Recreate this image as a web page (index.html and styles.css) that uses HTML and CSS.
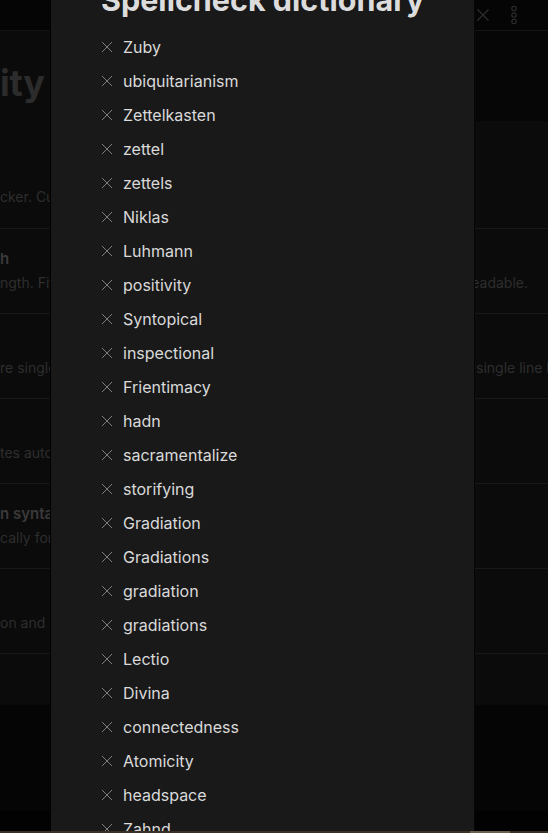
FILE: index.html
```html
<!DOCTYPE html>
<html lang="en">
<head>
<meta charset="utf-8">
<title>Spellcheck dictionary</title>
<link rel="stylesheet" href="styles.css">
</head>
<body>
<div class="screen">
  <header class="topbar">
    <div class="topbar-fill"></div>
    <span class="tb-icon">
      <svg width="14" height="14" viewBox="0 0 14 14"><path d="M1.5 1.5l11 11M12.5 1.5l-11 11" stroke="currentColor" stroke-width="1.2" fill="none"/></svg>
    </span>
    <span class="tb-icon">
      <svg width="8" height="20" viewBox="0 0 8 20"><circle cx="4" cy="3.5" r="2.2" stroke="currentColor" stroke-width="1.1" fill="none"/><circle cx="4" cy="10" r="2.2" stroke="currentColor" stroke-width="1.1" fill="none"/><circle cx="4" cy="16.5" r="2.2" stroke="currentColor" stroke-width="1.1" fill="none"/></svg>
    </span>
  </header>

  <main class="settings">
    <div class="settings-head">
      <h1 class="section-title">ity</h1>
      <div class="head-side"></div>
    </div>

    <div class="setting setting-first">
      <div class="setting-name">&nbsp;</div>
      <div class="setting-desc"><span class="lead">cker. Custom words are stored in the dictionary.</span></div>
    </div>
    <div class="setting">
      <div class="setting-name">h</div>
      <div class="setting-desc"><span class="lead">ngth. Fits less content onscreen, but long paragraphs are more</span><span class="tail">readable.</span></div>
    </div>
    <div class="setting">
      <div class="setting-name">&nbsp;</div>
      <div class="setting-desc setting-desc-bleed"><span class="lead">re single line breaks in reading view. Turn this off to make</span><span class="tail tail-bleed">single line breaks visible.</span></div>
    </div>
    <div class="setting">
      <div class="setting-name">&nbsp;</div>
      <div class="setting-desc"><span class="lead">tes automatically when typing.</span></div>
    </div>
    <div class="setting">
      <div class="setting-name">n syntax</div>
      <div class="setting-desc"><span class="lead">cally for bold, italic, code and more.</span></div>
    </div>
    <div class="setting">
      <div class="setting-name">&nbsp;</div>
      <div class="setting-desc"><span class="lead">on and list markers.</span></div>
    </div>
    <div class="setting setting-last"></div>
  </main>

  <div class="bottom-dark"></div>
  <div class="bottom-black"></div>
</div>

<div class="modal">
  <div class="modal-content">
    <h2 class="modal-title">Spellcheck dictionary</h2>
    <ul class="word-list">
      <li class="word"><span class="word-remove"><svg width="12" height="12" viewBox="0 0 12 12"><path d="M1 1l10 10M11 1L1 11" stroke="currentColor" stroke-width="1" fill="none"/></svg></span><span class="word-text">Zuby</span></li>
      <li class="word"><span class="word-remove"><svg width="12" height="12" viewBox="0 0 12 12"><path d="M1 1l10 10M11 1L1 11" stroke="currentColor" stroke-width="1" fill="none"/></svg></span><span class="word-text">ubiquitarianism</span></li>
      <li class="word"><span class="word-remove"><svg width="12" height="12" viewBox="0 0 12 12"><path d="M1 1l10 10M11 1L1 11" stroke="currentColor" stroke-width="1" fill="none"/></svg></span><span class="word-text">Zettelkasten</span></li>
      <li class="word"><span class="word-remove"><svg width="12" height="12" viewBox="0 0 12 12"><path d="M1 1l10 10M11 1L1 11" stroke="currentColor" stroke-width="1" fill="none"/></svg></span><span class="word-text">zettel</span></li>
      <li class="word"><span class="word-remove"><svg width="12" height="12" viewBox="0 0 12 12"><path d="M1 1l10 10M11 1L1 11" stroke="currentColor" stroke-width="1" fill="none"/></svg></span><span class="word-text">zettels</span></li>
      <li class="word"><span class="word-remove"><svg width="12" height="12" viewBox="0 0 12 12"><path d="M1 1l10 10M11 1L1 11" stroke="currentColor" stroke-width="1" fill="none"/></svg></span><span class="word-text">Niklas</span></li>
      <li class="word"><span class="word-remove"><svg width="12" height="12" viewBox="0 0 12 12"><path d="M1 1l10 10M11 1L1 11" stroke="currentColor" stroke-width="1" fill="none"/></svg></span><span class="word-text">Luhmann</span></li>
      <li class="word"><span class="word-remove"><svg width="12" height="12" viewBox="0 0 12 12"><path d="M1 1l10 10M11 1L1 11" stroke="currentColor" stroke-width="1" fill="none"/></svg></span><span class="word-text">positivity</span></li>
      <li class="word"><span class="word-remove"><svg width="12" height="12" viewBox="0 0 12 12"><path d="M1 1l10 10M11 1L1 11" stroke="currentColor" stroke-width="1" fill="none"/></svg></span><span class="word-text">Syntopical</span></li>
      <li class="word"><span class="word-remove"><svg width="12" height="12" viewBox="0 0 12 12"><path d="M1 1l10 10M11 1L1 11" stroke="currentColor" stroke-width="1" fill="none"/></svg></span><span class="word-text">inspectional</span></li>
      <li class="word"><span class="word-remove"><svg width="12" height="12" viewBox="0 0 12 12"><path d="M1 1l10 10M11 1L1 11" stroke="currentColor" stroke-width="1" fill="none"/></svg></span><span class="word-text">Frientimacy</span></li>
      <li class="word"><span class="word-remove"><svg width="12" height="12" viewBox="0 0 12 12"><path d="M1 1l10 10M11 1L1 11" stroke="currentColor" stroke-width="1" fill="none"/></svg></span><span class="word-text">hadn</span></li>
      <li class="word"><span class="word-remove"><svg width="12" height="12" viewBox="0 0 12 12"><path d="M1 1l10 10M11 1L1 11" stroke="currentColor" stroke-width="1" fill="none"/></svg></span><span class="word-text">sacramentalize</span></li>
      <li class="word"><span class="word-remove"><svg width="12" height="12" viewBox="0 0 12 12"><path d="M1 1l10 10M11 1L1 11" stroke="currentColor" stroke-width="1" fill="none"/></svg></span><span class="word-text">storifying</span></li>
      <li class="word"><span class="word-remove"><svg width="12" height="12" viewBox="0 0 12 12"><path d="M1 1l10 10M11 1L1 11" stroke="currentColor" stroke-width="1" fill="none"/></svg></span><span class="word-text">Gradiation</span></li>
      <li class="word"><span class="word-remove"><svg width="12" height="12" viewBox="0 0 12 12"><path d="M1 1l10 10M11 1L1 11" stroke="currentColor" stroke-width="1" fill="none"/></svg></span><span class="word-text">Gradiations</span></li>
      <li class="word"><span class="word-remove"><svg width="12" height="12" viewBox="0 0 12 12"><path d="M1 1l10 10M11 1L1 11" stroke="currentColor" stroke-width="1" fill="none"/></svg></span><span class="word-text">gradiation</span></li>
      <li class="word"><span class="word-remove"><svg width="12" height="12" viewBox="0 0 12 12"><path d="M1 1l10 10M11 1L1 11" stroke="currentColor" stroke-width="1" fill="none"/></svg></span><span class="word-text">gradiations</span></li>
      <li class="word"><span class="word-remove"><svg width="12" height="12" viewBox="0 0 12 12"><path d="M1 1l10 10M11 1L1 11" stroke="currentColor" stroke-width="1" fill="none"/></svg></span><span class="word-text">Lectio</span></li>
      <li class="word"><span class="word-remove"><svg width="12" height="12" viewBox="0 0 12 12"><path d="M1 1l10 10M11 1L1 11" stroke="currentColor" stroke-width="1" fill="none"/></svg></span><span class="word-text">Divina</span></li>
      <li class="word"><span class="word-remove"><svg width="12" height="12" viewBox="0 0 12 12"><path d="M1 1l10 10M11 1L1 11" stroke="currentColor" stroke-width="1" fill="none"/></svg></span><span class="word-text">connectedness</span></li>
      <li class="word"><span class="word-remove"><svg width="12" height="12" viewBox="0 0 12 12"><path d="M1 1l10 10M11 1L1 11" stroke="currentColor" stroke-width="1" fill="none"/></svg></span><span class="word-text">Atomicity</span></li>
      <li class="word"><span class="word-remove"><svg width="12" height="12" viewBox="0 0 12 12"><path d="M1 1l10 10M11 1L1 11" stroke="currentColor" stroke-width="1" fill="none"/></svg></span><span class="word-text">headspace</span></li>
      <li class="word"><span class="word-remove"><svg width="12" height="12" viewBox="0 0 12 12"><path d="M1 1l10 10M11 1L1 11" stroke="currentColor" stroke-width="1" fill="none"/></svg></span><span class="word-text">Zahnd</span></li>
    </ul>
  </div>
</div>

<div class="status-line"><span class="status-mark"></span></div>
</body>
</html>
```

FILE: styles.css
```css
* { box-sizing: border-box; }

html, body {
  margin: 0;
  padding: 0;
  width: 548px;
  height: 833px;
  overflow: hidden;
  background: #0b0b0b;
  font-family: Inter, "Noto Sans", "Liberation Sans", sans-serif;
}

.screen {
  display: flex;
  flex-direction: column;
  height: 833px;
}

/* top bar */
.topbar {
  height: 31px;
  flex: 0 0 31px;
  display: flex;
  align-items: center;
  background: #050505;
  border-bottom: 1px solid #141414;
  color: #2f2f2f;
  padding-right: 19px;
}
.topbar-fill { flex: 1; }
.tb-icon {
  display: flex;
  align-items: center;
  justify-content: center;
  width: 31px;
  height: 28px;
}

/* settings pane */
.settings {
  flex: 0 0 auto;
  overflow: hidden;
  background: #0b0b0b;
}
.settings-head {
  display: flex;
  height: 90px;
}
.section-title {
  flex: 1;
  margin: 0;
  padding-top: 31px;
  font-size: 36px;
  line-height: 42px;
  font-weight: 700;
  color: #2c2c2c;
  background: #0b0b0b;
  letter-spacing: -0.3px;
}
.head-side {
  flex: 0 0 72px;
  background: #060606;
}

.setting {
  height: 85px;
  padding-top: 18px;
  border-top: 1px solid #181818;
  white-space: nowrap;
}
.setting-first {
  margin-top: 23px;
  border-top: none;
  padding-top: 17px;
  height: 84px;
}
.setting-last {
  height: 52px;
}
.setting-name {
  font-size: 15px;
  line-height: 24px;
  font-weight: 600;
  color: #3a3a3a;
}
.setting-desc {
  display: flex;
  justify-content: space-between;
  font-size: 14px;
  line-height: 24px;
  color: #2e2e2e;
  padding-right: 20px;
  overflow: hidden;
}
.setting-desc-bleed { padding-right: 0; }
.lead { flex: 0 1 auto; overflow: hidden; }
.tail { flex: 0 0 auto; }
.tail-bleed {
  flex: 0 0 72px;
  overflow: hidden;
}

.bottom-dark {
  height: 106px;
  flex: 0 0 106px;
  background: #050505;
}
.bottom-black {
  flex: 1;
  background: #020202;
}

/* modal */
.modal {
  position: fixed;
  top: 0;
  bottom: 0;
  left: 50px;
  width: 425px;
  background: #191919;
  border-left: 1px solid #000;
  border-right: 1px solid #060606;
  overflow: hidden;
}
.modal-content {
  margin-top: -17px;
  padding-left: 50px;
}
.modal-title {
  margin: 0 0 13px;
  font-size: 30.5px;
  line-height: 34px;
  font-weight: 700;
  color: #dcdcdc;
}
.word-list {
  list-style: none;
  margin: 0;
  padding: 0;
}
.word {
  display: flex;
  align-items: center;
  height: 34px;
  gap: 10px;
}
.word-remove {
  display: flex;
  width: 12px;
  height: 12px;
  color: #7c7c7c;
}
.word-text {
  font-size: 16px;
  color: #dadada;
}

/* bottom status line */
.status-line {
  position: fixed;
  left: 0;
  right: 0;
  bottom: 0;
  height: 2px;
  background: #3a3124;
}
.status-mark {
  display: block;
  margin-left: 470px;
  width: 40px;
  height: 2px;
  background: #6b5f4d;
}
```
